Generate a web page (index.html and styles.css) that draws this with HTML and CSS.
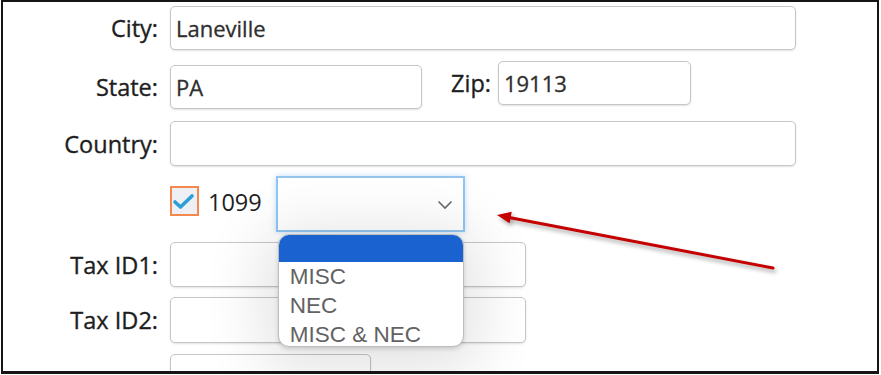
FILE: index.html
```html
<!DOCTYPE html>
<html>

<head>
    <meta content="text/html; charset=utf-8" http-equiv="Content-Type">
    <title>Vendor address</title>

    <link rel="stylesheet" href="styles.css">
</head>

<body>

    <div class="frame">
        <div class="row rowCity">
            <label class="fieldLabel">City:</label>
            <input class="textBox wide" type="text" value="Laneville">
        </div>
        <div class="row rowState">
            <label class="fieldLabel">State:</label>
            <input class="textBox state" type="text" value="PA">
            <div class="zipGroup">
                <label class="zipLabel">Zip:</label>
                <input class="textBox zip" type="text" value="19113">
            </div>
        </div>
        <div class="row rowCountry">
            <label class="fieldLabel">Country:</label>
            <input class="textBox wide" type="text" value="">
        </div>
        <div class="row rowForm">
            <span class="fieldLabel"></span>
            <span class="checkBox">
                <svg width="25" height="26" viewBox="0 0 25 26">
                    <path d="M3 14 L8.5 19 L20 8" fill="none" stroke="#2a9fd8" stroke-width="3.6" stroke-linecap="round" stroke-linejoin="round"/>
                </svg>
            </span>
            <span class="formName">1099</span>
            <div class="selectWrap">
                <div class="selectBox">
                    <svg class="chevron" width="16" height="10" viewBox="0 0 16 10">
                        <path d="M1.5 1.5 L8 8 L14.5 1.5" fill="none" stroke="#6b6b6b" stroke-width="1.6"/>
                    </svg>
                </div>
                <ul class="optionList">
                    <li class="option selected">&nbsp;</li>
                    <li class="option">MISC</li>
                    <li class="option">NEC</li>
                    <li class="option">MISC &amp; NEC</li>
                </ul>
            </div>
        </div>
        <div class="row rowTax1">
            <label class="fieldLabel">Tax ID1:</label>
            <input class="textBox tax" type="text" value="">
        </div>
        <div class="row rowTax2">
            <label class="fieldLabel">Tax ID2:</label>
            <input class="textBox tax" type="text" value="">
        </div>
        <div class="row rowLast">
            <span class="fieldLabel"></span>
            <input class="textBox last" type="text" value="">
        </div>
    </div>

    <svg class="arrow" width="881" height="375" viewBox="0 0 881 375">
        <line x1="509" y1="217.5" x2="773" y2="268" stroke="#c40000" stroke-width="3" stroke-linecap="round"/>
        <polygon points="497,215 511.7,211.7 509.6,223.2" fill="#c40000"/>
    </svg>

</body>

</html>
```

FILE: styles.css
```css
body {
    margin: 0;
    background: #ffffff;
    position: relative;
    font-family: "Open Sans", "DejaVu Sans", sans-serif;
    color: #1e1e1e;
}

.frame {
    box-sizing: border-box;
    width: 878px;
    height: 374px;
    margin-left: 1px;
    border: 2px solid #151515;
    border-bottom-width: 3px;
    overflow: hidden;
    padding-top: 4px;
    box-shadow: 0 1px 0 #b9b9b9;
}

.row {
    display: flex;
    align-items: center;
    column-gap: 12px;
}

.rowState {
    margin-top: 15px;
}

.rowCountry {
    margin-top: 12px;
}

.rowForm {
    margin-top: 10px;
    position: relative;
    z-index: 2;
}

.rowTax1,
.rowTax2 {
    margin-top: 10px;
}

.rowLast {
    margin-top: 11px;
}

.fieldLabel {
    display: block;
    width: 155px;
    text-align: right;
    font-size: 23.5px;
    flex-shrink: 0;
    -webkit-text-stroke: 0.35px #1e1e1e;
}

.textBox {
    box-sizing: border-box;
    height: 44px;
    padding: 0 5px;
    border: 1px solid #c6c6c6;
    border-radius: 5px;
    background: #ffffff;
    box-shadow: 0 1px 2px rgba(0, 0, 0, 0.12);
    font-family: "Open Sans", "DejaVu Sans", sans-serif;
    font-size: 22px;
    color: #2e2e2e;
    -webkit-text-stroke: 0.3px #2e2e2e;
    outline: none;
}

.wide {
    width: 626px;
}

.rowCountry .wide {
    height: 45px;
}

.state {
    width: 252px;
}

.zipGroup {
    display: flex;
    align-items: center;
    column-gap: 7px;
    margin-left: 17px;
    margin-top: -8px;
}

.zipLabel {
    font-size: 23.5px;
    -webkit-text-stroke: 0.35px #1e1e1e;
}

.zip {
    width: 193px;
}

.tax {
    width: 356px;
    height: 45px;
}

.rowTax2 .tax {
    height: 46px;
}

.last {
    width: 201px;
    height: 46px;
}

.checkBox {
    box-sizing: border-box;
    display: flex;
    align-items: center;
    justify-content: center;
    width: 29px;
    height: 30px;
    margin-top: -6px;
    border: 2px solid #f3894c;
    background: #eef0f5;
}

.formName {
    font-size: 23.5px;
    margin-left: -3px;
    margin-top: -5px;
}

.selectWrap {
    position: relative;
    margin-left: 2px;
}

.selectBox {
    box-sizing: border-box;
    width: 189px;
    height: 56px;
    border: 2px solid #93c5ef;
    background: #ffffff;
    box-shadow: 0 0 6px rgba(120, 180, 235, 0.45);
    display: flex;
    align-items: center;
    justify-content: flex-end;
    padding-right: 10px;
    padding-top: 2px;
}

.optionList {
    position: absolute;
    left: 2px;
    top: 58px;
    box-sizing: border-box;
    width: 186px;
    height: 113px;
    margin: 0;
    padding: 0;
    list-style: none;
    background: #ffffff;
    border: 1px solid #bdbdbd;
    border-radius: 11px;
    overflow: hidden;
    box-shadow: 0 10px 60px 16px rgba(0, 0, 0, 0.11), 0 2px 4px rgba(0, 0, 0, 0.15);
}

.option {
    height: 29px;
    line-height: 29px;
    padding-left: 11px;
    font-family: "Liberation Sans", Arial, sans-serif;
    font-size: 22.5px;
    color: #626262;
    white-space: nowrap;
}

.option.selected {
    height: 27px;
    background: #1b62d1;
}

.arrow {
    position: absolute;
    left: 0;
    top: 0;
    z-index: 5;
    pointer-events: none;
    filter: drop-shadow(2px 3px 2px rgba(0, 0, 0, 0.35));
}
```
